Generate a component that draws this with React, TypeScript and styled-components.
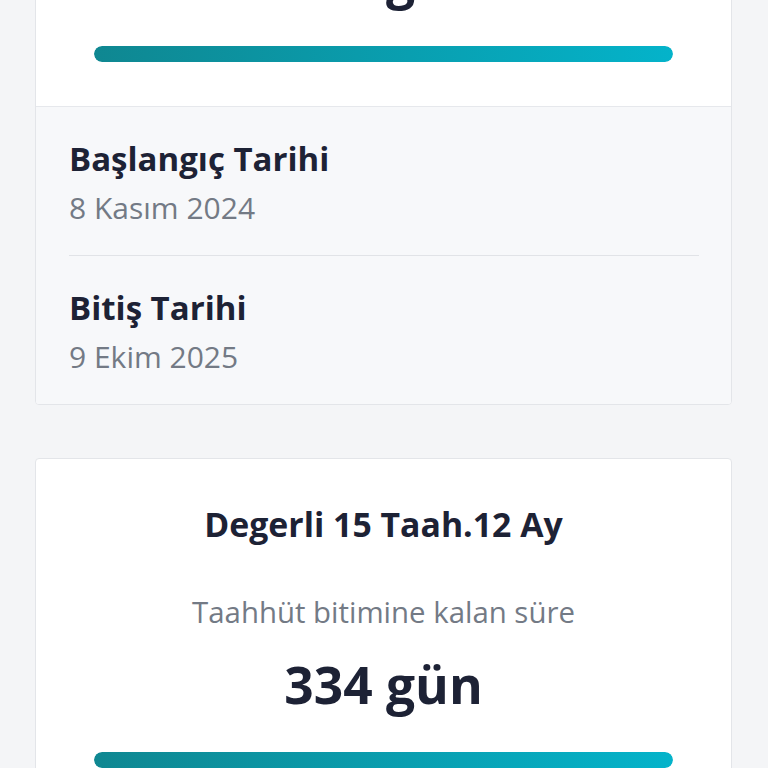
import { useLayoutEffect } from 'react';
import { createGlobalStyle, styled } from 'styled-components';

type Commitment = {
  title: string;
  remainingDays: number;
  progress: number;
  startDate: string;
  endDate: string;
};

const commitments: Commitment[] = [
  {
    title: 'Degerli 15 Taah.12 Ay',
    remainingDays: 334,
    progress: 100,
    startDate: '8 Kasım 2024',
    endDate: '9 Ekim 2025',
  },
  {
    title: 'Degerli 15 Taah.12 Ay',
    remainingDays: 334,
    progress: 100,
    startDate: '8 Kasım 2024',
    endDate: '9 Ekim 2025',
  },
];

export default function App(): JSX.Element {
  // the reference shows the list scrolled down a bit
  useLayoutEffect(() => {
    window.scrollTo(0, 302);
  }, []);

  return (
    <>
      <GlobalStyle />
      <Page>
        {commitments.map((item, index) => (
          <Card key={index}>
            <Summary>
              <Title>{item.title}</Title>
              <Caption>Taahhüt bitimine kalan süre</Caption>
              <Days>{item.remainingDays} gün</Days>
              <Track>
                <Fill style={{ width: `${item.progress}%` }} />
              </Track>
            </Summary>
            <Dates>
              <DateRow>
                <DateLabel>Başlangıç Tarihi</DateLabel>
                <DateValue>{item.startDate}</DateValue>
              </DateRow>
              <DateRow>
                <DateLabel>Bitiş Tarihi</DateLabel>
                <DateValue>{item.endDate}</DateValue>
              </DateRow>
            </Dates>
          </Card>
        ))}
      </Page>
    </>
  );
}

const GlobalStyle = createGlobalStyle`
  html, body {
    margin: 0;
    padding: 0;
    background: #f4f5f7;
    font-family: "Open Sans", "Noto Sans", "Liberation Sans", sans-serif;
    color: #1d2235;
  }
`;

const Page = styled.div`
  display: flex;
  flex-direction: column;
  gap: 53px;
  padding: 54px 36px 400px 35px;
`;

const Card = styled.div`
  background: #ffffff;
  border: 1px solid #e3e5e9;
  border-radius: 4px;
  overflow: hidden;
`;

const Summary = styled.div`
  display: flex;
  flex-direction: column;
  align-items: center;
  padding: 45px 58px 44px;
  border-bottom: 1px solid #e6e8ec;
`;

const Title = styled.div`
  font-size: 33.8px;
  line-height: 40px;
  font-weight: 700;
  color: #1d2235;
`;

const Caption = styled.div`
  margin-top: 50px;
  font-size: 29.4px;
  line-height: 36px;
  color: #737a85;
`;

const Days = styled.div`
  margin-top: 25px;
  font-size: 51.5px;
  line-height: 58px;
  font-weight: 700;
  color: #1d2235;
`;

const Track = styled.div`
  align-self: stretch;
  margin-top: 39px;
  height: 16px;
  border-radius: 8px;
  background: #e6f4f6;
  overflow: hidden;
`;

const Fill = styled.div`
  height: 100%;
  border-radius: 8px;
  background: linear-gradient(90deg, #0f8791 0%, #04b3ca 100%);
`;

const Dates = styled.div`
  background: #f7f8fa;
  padding: 0 32px 0 33px;
`;

const DateRow = styled.div`
  display: flex;
  flex-direction: column;
  gap: 12px;
  padding: 32px 0 30px;

  & + & {
    border-top: 1px solid #e1e3e7;
  }
`;

const DateLabel = styled.div`
  font-size: 33px;
  line-height: 40px;
  font-weight: 700;
  color: #1d2235;
`;

const DateValue = styled.div`
  font-size: 30px;
  line-height: 34px;
  color: #737a85;
`;
